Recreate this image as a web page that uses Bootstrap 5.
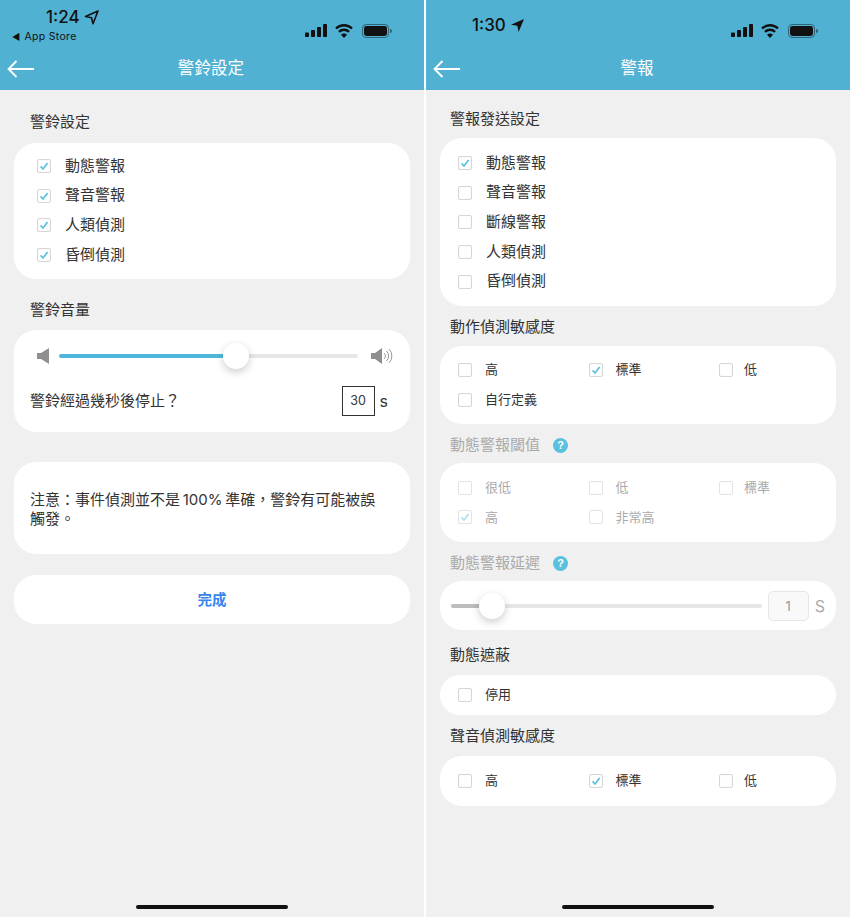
<!DOCTYPE html>
<html lang="zh-Hant">

<head>
    <meta charset="UTF-8">
    <title>警鈴設定</title>
    <link href="https://cdn.jsdelivr.net/npm/bootstrap@5.3.0/dist/css/bootstrap.min.css" rel="stylesheet">
    <style>
        html, body { margin: 0; background: #fff; }
        body { font-family: "Inter", "Noto Sans CJK TC", sans-serif; color: #333; width: 850px; height: 917px; overflow: hidden; }
        .screen { width: 424px; height: 917px; background: #f0f0f0; }
        .screen-right { margin-left: 2px; }
        .app-head { height: 90px; background: #51b1d3; color: #fff; }
        .status-row { height: 50px; color: #111; }
        .status-left { width: 150px; padding-left: 12px; }
        .clock { font-size: 17px; line-height: 20px; font-weight: 500; margin-left: 34px; padding-top: 7px; height: 27px; }
        .clock-r { padding-top: 15px; height: 35px; margin-left: 34px; }
        .store-link { font-size: 10.5px; line-height: 14px; margin-top: 3px; letter-spacing: .3px; }
        .store-arrow { font-size: 9px; margin-right: 4px; }
        .status-icons { padding-top: 17px; padding-right: 31px; }
        .title-row { height: 37px; }
        .title-row svg { margin-left: 7px; }
        .head-title { width: 100%; font-size: 16.5px; font-weight: 400; line-height: 37px; margin-left: -36px; letter-spacing: .1px; }
        .sec-title { font-size: 15px; line-height: 20px; height: 20px; padding-left: 16px; color: #333; }
        .sec-title-r { padding-left: 10px; }
        .panel { background: #fff; border-radius: 22px; }
        .wrap-l { padding: 22px 14px 0 14px; }
        .wrap-r { padding: 19px 14px 0 14px; }
        .opt { height: 29.7px; font-size: 15px; }
        .tick { width: 14px; height: 14px; border: 1px solid #d6d6d6; border-radius: 2px; background: #fff; flex: none; box-shadow: inset 0 0 1px #e4e4e4; }
        .tick svg { display: block; margin: 1px 0 0 1px; }
        .opt-list-l { margin-top: 11px; padding: 8px 23px 0 23px; height: 136px; }
        .opt-list-r { margin-top: 9px; padding: 10px 18px 0 18px; height: 168px; }
        .opt-l-text { margin-left: 14px; }
        .opt-r-text { margin-left: 13px; }
        .opt-list-r .opt-r-text { margin-left: 14px; }
        .opt-grid { display: grid; grid-template-columns: repeat(3, 130.5px); align-content: center; padding: 0 18px; }
        .opt-grid .opt { font-size: 13px; }
        .opt-grid .opt:nth-child(3) .opt-r-text { margin-left: 11px; }
        .muted-part .sec-title, .muted-part .opt, .muted-part .unit-big { color: #aaa; }
        .muted-part .tick { border-color: #e3e3e3; box-shadow: none; }
        .muted-part .tick svg { opacity: .5; }
        .gap-volume { margin-top: 21px; }
        .vol-panel { margin-top: 10px; height: 102px; padding: 17px 16px 0 23px; }
        .track { flex: 1 1 auto; height: 4px; background: #e6e6e6; border-radius: 2px; position: relative; }
        .track-fill { height: 4px; background: #4fb8da; border-radius: 2px; }
        .track-grey { background: #bdbdbd; }
        .knob { position: absolute; top: -11px; width: 26px; height: 26px; border-radius: 50%; background: #fff; box-shadow: 0 3px 9px rgba(0,0,0,.2); }
        .vol-track { margin: 0 13px 0 9px; }
        .secs-row { margin-top: 21px; font-size: 15px; padding-right: 7px; margin-left: -7px; }
        .secs-box { width: 33px; height: 30px; border: 1px solid #333; font-size: 12.5px; line-height: 28px; text-align: center; }
        .secs-unit { font-size: 16px; margin-left: 5px; margin-right: -1px; }
        .note-panel { height: 92px; margin-top: 30px; padding: 28px 25px 0 16px; font-size: 15px; line-height: 19px; color: #333; }
        .done-panel { height: 49px; margin-top: 21px; text-align: center; line-height: 49px; color: #3a85ef; font-size: 14.5px; font-weight: 700; }
        .home-bar { width: 152px; height: 4px; background: #111; border-radius: 2px; margin-bottom: 8px; }
        .help-dot { width: 15px; height: 15px; border-radius: 50%; background: #5ac0e0; color: #fff; font-size: 11px; line-height: 15px; text-align: center; font-weight: 700; margin-left: 13px; font-family: "Liberation Sans", sans-serif; }
        .num-box { width: 41px; height: 30px; background: #f9f9f9; border: 1px solid #e6e6e6; border-radius: 5px; font-size: 13px; line-height: 28px; text-align: center; color: #999; flex: none; }
        .unit-big { font-size: 16px; margin-left: 6px; }
        .delay-panel { margin-top: 8px; height: 49px; padding: 0 11px; }
        .delay-track { margin-right: 6px; }
        .gap-a { margin-top: 11px; }
        .gap-c { margin-top: 15px; }
        .top-8 { margin-top: 8px; }
        .top-9 { margin-top: 9px; }
        .top-10 { margin-top: 10px; }
        .tall-78 { height: 78px; }
        .tall-79 { height: 79px; }
        .tall-40 { height: 40px; }
        .tall-50 { height: 50px; }
    </style>
</head>

<body class="d-flex">
    <svg width="0" height="0" class="position-absolute">
        <symbol id="tickMark" viewBox="0 0 10 10">
            <path d="M1.6 5.4 L4 8 L8.6 2" fill="none" stroke="#5ac0e0" stroke-width="1.7"/>
        </symbol>
        <symbol id="backArrow" viewBox="0 0 28 18">
            <path d="M27 9 H1.5 M9.5 1 L1.5 9 L9.5 17" fill="none" stroke="#fff" stroke-width="1.8"/>
        </symbol>
        <symbol id="signalIcons" viewBox="0 0 88 16">
            <rect x="0" y="9.5" width="4" height="4.5" rx=".8" fill="#111"/>
            <rect x="6" y="7" width="4" height="7" rx=".8" fill="#111"/>
            <rect x="12" y="4" width="4" height="10" rx=".8" fill="#111"/>
            <rect x="18" y="1" width="4" height="13" rx=".8" fill="#111"/>
            <path d="M31 5.5 A11.5 11.5 0 0 1 47 5.5 M34 8.8 A7 7 0 0 1 44 8.8" fill="none" stroke="#111" stroke-width="2.4"/>
            <path d="M36 11.8 A4.2 4.2 0 0 1 42 11.8 L39 15 Z" fill="#111"/>
            <rect x="57.5" y="1.5" width="26" height="13" rx="3.6" fill="none" stroke="#2f6478" stroke-width="1"/>
            <rect x="59" y="3" width="23" height="10" rx="2.4" fill="#111"/>
            <path d="M85 6 a2 2 0 0 1 0 4 z" fill="#2f6478"/>
        </symbol>
    </svg>

    <!-- left screen -->
    <div class="screen d-flex flex-column">
        <div class="app-head">
            <div class="status-row d-flex justify-content-between">
                <div class="status-left">
                    <div class="clock d-flex align-items-center gap-1">1:24
                        <svg width="15" height="15" viewBox="0 0 15 15"><path d="M14 1 L1.5 6.5 L7.5 7.8 L9 13.8 Z" fill="none" stroke="#111" stroke-width="1.6" stroke-linejoin="round"/></svg>
                    </div>
                    <div class="store-link"><span class="store-arrow">◀</span>App Store</div>
                </div>
                <div class="status-icons"><svg width="88" height="16"><use href="#signalIcons"/></svg></div>
            </div>
            <div class="title-row d-flex align-items-center">
                <svg width="28" height="18" class="flex-shrink-0"><use href="#backArrow"/></svg>
                <div class="head-title text-center">警鈴設定</div>
            </div>
        </div>
        <div class="wrap-l">
            <div class="sec-title">警鈴設定</div>
            <div class="panel opt-list-l">
                <div class="opt d-flex align-items-center"><span class="tick"><svg width="10" height="10"><use href="#tickMark"/></svg></span><span class="opt-l-text">動態警報</span></div>
                <div class="opt d-flex align-items-center"><span class="tick"><svg width="10" height="10"><use href="#tickMark"/></svg></span><span class="opt-l-text">聲音警報</span></div>
                <div class="opt d-flex align-items-center"><span class="tick"><svg width="10" height="10"><use href="#tickMark"/></svg></span><span class="opt-l-text">人類偵測</span></div>
                <div class="opt d-flex align-items-center"><span class="tick"><svg width="10" height="10"><use href="#tickMark"/></svg></span><span class="opt-l-text">昏倒偵測</span></div>
            </div>
            <div class="sec-title gap-volume">警鈴音量</div>
            <div class="panel vol-panel">
                <div class="d-flex align-items-center">
                    <svg width="13" height="16" viewBox="0 0 13 16" class="flex-shrink-0"><path d="M0 5 H4 L12 0 V16 L4 11 H0 Z" fill="#8f8f8f"/></svg>
                    <div class="track vol-track">
                        <div class="track-fill" style="width: 59%"></div>
                        <div class="knob" style="left: 164px"></div>
                    </div>
                    <svg width="23" height="18" viewBox="0 0 23 18" class="flex-shrink-0"><path d="M0 6 H4 L11 1 V17 L4 12 H0 Z" fill="#8f8f8f"/><path d="M13 6 a4 4 0 0 1 0 6 M15.5 4 a7 7 0 0 1 0 10 M18 2 a10 10 0 0 1 0 14" fill="none" stroke="#999" stroke-width="1"/></svg>
                </div>
                <div class="secs-row d-flex align-items-center justify-content-between">
                    <span>警鈴經過幾秒後停止？</span>
                    <span class="d-flex align-items-center"><span class="secs-box">30</span><span class="secs-unit">s</span></span>
                </div>
            </div>
            <div class="panel note-panel">注意：事件偵測並不是&thinsp;100%&thinsp;準確，警鈴有可能被誤觸發。</div>
            <div class="panel done-panel">完成</div>
        </div>
        <div class="home-bar mt-auto mx-auto"></div>
    </div>

    <!-- right screen -->
    <div class="screen screen-right d-flex flex-column">
        <div class="app-head">
            <div class="status-row d-flex justify-content-between">
                <div class="status-left">
                    <div class="clock clock-r d-flex align-items-center gap-1">1:30
                        <svg width="15" height="15" viewBox="0 0 15 15"><path d="M14 1 L1 6.8 L7.3 7.8 L8.6 14 Z" fill="#111"/></svg>
                    </div>
                </div>
                <div class="status-icons"><svg width="88" height="16"><use href="#signalIcons"/></svg></div>
            </div>
            <div class="title-row d-flex align-items-center">
                <svg width="28" height="18" class="flex-shrink-0"><use href="#backArrow"/></svg>
                <div class="head-title text-center">警報</div>
            </div>
        </div>
        <div class="wrap-r">
            <div class="sec-title sec-title-r">警報發送設定</div>
            <div class="panel opt-list-r">
                <div class="opt d-flex align-items-center"><span class="tick"><svg width="10" height="10"><use href="#tickMark"/></svg></span><span class="opt-r-text">動態警報</span></div>
                <div class="opt d-flex align-items-center"><span class="tick"></span><span class="opt-r-text">聲音警報</span></div>
                <div class="opt d-flex align-items-center"><span class="tick"></span><span class="opt-r-text">斷線警報</span></div>
                <div class="opt d-flex align-items-center"><span class="tick"></span><span class="opt-r-text">人類偵測</span></div>
                <div class="opt d-flex align-items-center"><span class="tick"></span><span class="opt-r-text">昏倒偵測</span></div>
            </div>
            <div class="sec-title sec-title-r gap-a">動作偵測敏感度</div>
            <div class="panel opt-grid top-9 tall-78">
                <div class="opt d-flex align-items-center"><span class="tick"></span><span class="opt-r-text">高</span></div>
                <div class="opt d-flex align-items-center"><span class="tick"><svg width="10" height="10"><use href="#tickMark"/></svg></span><span class="opt-r-text">標準</span></div>
                <div class="opt d-flex align-items-center"><span class="tick"></span><span class="opt-r-text">低</span></div>
                <div class="opt d-flex align-items-center"><span class="tick"></span><span class="opt-r-text">自行定義</span></div>
            </div>
            <div class="muted-part">
                <div class="sec-title sec-title-r gap-a d-flex align-items-center">動態警報閾值<span class="help-dot">?</span></div>
                <div class="panel opt-grid top-8 tall-79">
                    <div class="opt d-flex align-items-center"><span class="tick"></span><span class="opt-r-text">很低</span></div>
                    <div class="opt d-flex align-items-center"><span class="tick"></span><span class="opt-r-text">低</span></div>
                    <div class="opt d-flex align-items-center"><span class="tick"></span><span class="opt-r-text">標準</span></div>
                    <div class="opt d-flex align-items-center"><span class="tick"><svg width="10" height="10"><use href="#tickMark"/></svg></span><span class="opt-r-text">高</span></div>
                    <div class="opt d-flex align-items-center"><span class="tick"></span><span class="opt-r-text">非常高</span></div>
                </div>
                <div class="sec-title sec-title-r gap-a d-flex align-items-center">動態警報延遲<span class="help-dot">?</span></div>
                <div class="panel delay-panel d-flex align-items-center">
                    <div class="track delay-track">
                        <div class="track-fill track-grey" style="width: 12%"></div>
                        <div class="knob" style="left: 28px"></div>
                    </div>
                    <span class="num-box">1</span>
                    <span class="unit-big">S</span>
                </div>
            </div>
            <div class="sec-title sec-title-r gap-c">動態遮蔽</div>
            <div class="panel opt-grid top-10 tall-40">
                <div class="opt d-flex align-items-center"><span class="tick"></span><span class="opt-r-text">停用</span></div>
            </div>
            <div class="sec-title sec-title-r gap-a">聲音偵測敏感度</div>
            <div class="panel opt-grid top-10 tall-50">
                <div class="opt d-flex align-items-center"><span class="tick"></span><span class="opt-r-text">高</span></div>
                <div class="opt d-flex align-items-center"><span class="tick"><svg width="10" height="10"><use href="#tickMark"/></svg></span><span class="opt-r-text">標準</span></div>
                <div class="opt d-flex align-items-center"><span class="tick"></span><span class="opt-r-text">低</span></div>
            </div>
        </div>
        <div class="home-bar mt-auto mx-auto"></div>
    </div>
</body>

</html>
